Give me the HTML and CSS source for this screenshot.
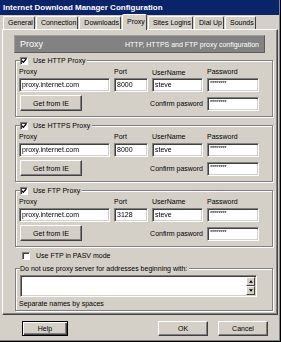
FILE: index.html
```html
<!doctype html>
<html lang="en">
  <head>
    <meta charset="UTF-8" />
    <title>Internet Download Manager Configuration</title>
    <link rel="stylesheet" href="styles.css">
  </head>
  <body>
    <div class="window">
      <div class="titlebar">Internet Download Manager Configuration</div>

      <ul class="tabs">
        <li class="tab">General</li>
        <li class="tab">Connection</li>
        <li class="tab">Downloads</li>
        <li class="tab active">Proxy</li>
        <li class="tab">Sites Logins</li>
        <li class="tab">Dial Up</li>
        <li class="tab">Sounds</li>
      </ul>

      <section class="panel">
        <div class="banner">
          <span class="banner-title">Proxy</span>
          <span class="banner-note">HTTP, HTTPS and FTP proxy configuration</span>
        </div>

        <fieldset class="group">
          <legend class="legend">
            <span class="check checked"><svg viewBox="0 0 6 6"><path d="M0.8 2.8 L2.3 4.4 L5.2 1" /></svg></span>
            Use HTTP Proxy
          </legend>
          <div class="proxy-grid">
            <span class="lbl">Proxy</span>
            <span class="lbl">Port</span>
            <span class="lbl lbl-low">UserName</span>
            <span class="lbl">Password</span>
            <div class="field">proxy.internet.com</div>
            <div class="field">8000</div>
            <div class="field">steve</div>
            <div class="field pw">********</div>
            <button class="btn btn-ie">Get from IE</button>
            <span class="confirm">Confirm pasword</span>
            <div class="field pw pw-confirm">********</div>
          </div>
        </fieldset>

        <fieldset class="group">
          <legend class="legend">
            <span class="check checked"><svg viewBox="0 0 6 6"><path d="M0.8 2.8 L2.3 4.4 L5.2 1" /></svg></span>
            Use HTTPS Proxy
          </legend>
          <div class="proxy-grid">
            <span class="lbl">Proxy</span>
            <span class="lbl">Port</span>
            <span class="lbl">UserName</span>
            <span class="lbl">Password</span>
            <div class="field">proxy.internet.com</div>
            <div class="field">8000</div>
            <div class="field">steve</div>
            <div class="field pw">********</div>
            <button class="btn btn-ie">Get from IE</button>
            <span class="confirm">Confirm pasword</span>
            <div class="field pw pw-confirm">********</div>
          </div>
        </fieldset>

        <fieldset class="group">
          <legend class="legend">
            <span class="check checked"><svg viewBox="0 0 6 6"><path d="M0.8 2.8 L2.3 4.4 L5.2 1" /></svg></span>
            Use FTP Proxy
          </legend>
          <div class="proxy-grid">
            <span class="lbl">Proxy</span>
            <span class="lbl">Port</span>
            <span class="lbl">UserName</span>
            <span class="lbl">Password</span>
            <div class="field">proxy.internet.com</div>
            <div class="field">3128</div>
            <div class="field">steve</div>
            <div class="field pw">********</div>
            <button class="btn btn-ie">Get from IE</button>
            <span class="confirm">Confirm pasword</span>
            <div class="field pw pw-confirm">********</div>
          </div>
        </fieldset>

        <div class="pasv-row">
          <span class="check"></span>
          Use FTP in PASV mode
        </div>

        <fieldset class="group exclude">
          <legend class="legend">Do not use proxy server for addresses beginning with:</legend>
          <div class="memo">
            <div class="memo-text"></div>
            <div class="scrollbar">
              <span class="scroll-btn"><svg viewBox="0 0 5 3"><path d="M2.5 0 L5 3 L0 3 Z" /></svg></span>
              <span class="scroll-btn"><svg viewBox="0 0 5 3"><path d="M0 0 L5 0 L2.5 3 Z" /></svg></span>
            </div>
          </div>
          <p class="hint">Separate names by spaces</p>
        </fieldset>
      </section>

      <div class="actions">
        <button class="btn btn-default">Help</button>
        <button class="btn btn-ok">OK</button>
        <button class="btn">Cancel</button>
      </div>
    </div>
  </body>
</html>
```

FILE: styles.css
```css
* {
  margin: 0;
  padding: 0;
  box-sizing: border-box;
}

body {
  width: 281px;
  height: 342px;
  background: #d4d0c8;
  font-family: "Liberation Sans", Arial, sans-serif;
  font-size: 7px;
  color: #000;
}

.window {
  width: 281px;
  height: 342px;
  display: flex;
  flex-direction: column;
  background: #d4d0c8;
  box-shadow: inset -1px -1px 0 #000, inset -2px -2px 0 #808080;
}

.titlebar {
  height: 15px;
  margin-right: 2px;
  padding-left: 3px;
  background: #0a246a;
  color: #fff;
  font-weight: bold;
  font-size: 8px;
  line-height: 15px;
}

/* tab strip */
.tabs {
  display: flex;
  align-items: flex-end;
  height: 14px;
  padding-left: 3px;
  list-style: none;
}

.tab {
  height: 13px;
  padding: 0 1px 0 4px;
  margin-right: 1px;
  line-height: 12px;
  border: 1px solid;
  border-bottom: none;
  border-color: #fff #404040 transparent #fff;
  border-radius: 2px 2px 0 0;
  white-space: nowrap;
}

.tab.active {
  position: relative;
  z-index: 1;
  height: 16px;
  margin-bottom: -1px;
  background: #d4d0c8;
  line-height: 13px;
}

.panel {
  height: 286px;
  margin: 0 3px 0 2px;
  padding: 5px 4px 0 11px;
  border: 1px solid;
  border-color: #fff #404040 #404040 #fff;
  box-shadow: inset -1px -1px 0 #808080;
}

.banner {
  width: 251px;
  height: 18px;
  display: flex;
  align-items: center;
  justify-content: space-between;
  padding: 0 5px;
  background: #828282;
  border: 1px solid;
  border-color: #9c9c9c #5c5c5c #5c5c5c #9c9c9c;
  color: #fff;
}

.banner-title {
  font-size: 9px;
}

/* etched group boxes */
.group {
  width: 258px;
  margin: 3px 0 0 1px;
  padding: 2px 4px 5px 3px;
  border: 1px solid #808080;
  box-shadow: inset 1px 1px 0 #fff, 1px 1px 0 #fff;
}

.group + .group {
  margin-top: 4px;
}

.legend {
  display: flex;
  align-items: center;
  gap: 5px;
  height: 9px;
  margin-left: 1px;
  padding: 0 2px 0 0;
  background: #d4d0c8;
  line-height: 9px;
  white-space: nowrap;
}

.check {
  width: 8px;
  height: 8px;
  display: inline-flex;
  align-items: center;
  justify-content: center;
  background: #fff;
  border: 1px solid;
  border-color: #808080 #fff #fff #808080;
  box-shadow: inset 1px 1px 0 #404040;
}

.check svg {
  width: 6px;
  height: 6px;
  fill: none;
  stroke: #000;
  stroke-width: 1.3;
}

.proxy-grid {
  display: grid;
  grid-template-columns: 91px 34px 51px 52px;
  column-gap: 4px;
}

.lbl {
  height: 11px;
  line-height: 10px;
}

.lbl-low {
  line-height: 12px;
}

/* grayscale keeps the small text free of colour fringes on white */
.field {
  height: 14px;
  padding: 0 2px;
  line-height: 12px;
  white-space: nowrap;
  overflow: hidden;
  background: #fff;
  border: 1px solid;
  border-color: #808080 #fff #fff #808080;
  box-shadow: inset 1px 1px 0 #404040, inset -1px -1px 0 #d4d0c8;
  filter: grayscale(1);
}

.pw {
  font-size: 6px;
  line-height: 8px;
  letter-spacing: -0.3px;
}

.btn {
  height: 15px;
  font-family: inherit;
  font-size: 7px;
  color: #000;
  background: #d4d0c8;
  border: 1px solid;
  border-color: #fff #404040 #404040 #fff;
  box-shadow: inset -1px -1px 0 #808080;
}

.btn-ie {
  width: 62px;
  height: 16px;
  margin: 3px 0 0 1px;
}

.confirm {
  grid-column: 2 / 4;
  justify-self: end;
  align-self: center;
  margin-top: 3px;
}

.pw-confirm {
  align-self: end;
}

.pasv-row {
  display: flex;
  align-items: center;
  gap: 6px;
  height: 9px;
  margin: 4px 0 0 8px;
}

.exclude {
  margin-top: 4px;
  padding-bottom: 1px;
}

.memo {
  display: flex;
  width: 237px;
  height: 22px;
  margin-left: 1px;
  background: #fff;
  border: 1px solid;
  border-color: #808080 #fff #fff #808080;
  box-shadow: inset 1px 1px 0 #404040, inset -1px -1px 0 #d4d0c8;
}

.memo-text {
  flex: 1;
}

.scrollbar {
  display: flex;
  flex-direction: column;
  justify-content: space-between;
  width: 9px;
  margin: 1px 1px 1px 0;
  background: #e8e6e2;
}

.scroll-btn {
  height: 9px;
  display: flex;
  align-items: center;
  justify-content: center;
  background: #d4d0c8;
  border: 1px solid;
  border-color: #fff #404040 #404040 #fff;
}

.scroll-btn svg {
  width: 4px;
  height: 3px;
  fill: #000;
}

.hint {
  height: 10px;
  margin-top: 2px;
  line-height: 10px;
}

.actions {
  display: flex;
  margin-top: 6px;
  padding: 0 13px 0 22px;
}

.actions .btn {
  width: 50px;
}

.actions .btn-default {
  width: 46px;
  margin-right: auto;
  border-color: #000;
  box-shadow: inset 1px 1px 0 #fff, inset -1px -1px 0 #404040, inset -2px -2px 0 #808080;
}

.btn-ok {
  margin-right: 10px;
}
```
